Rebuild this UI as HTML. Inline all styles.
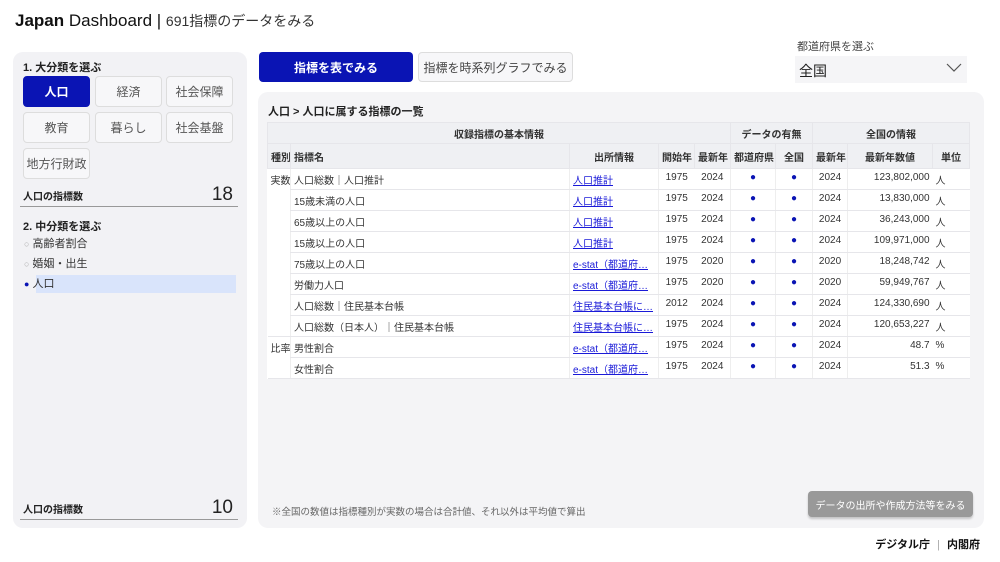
<!DOCTYPE html>
<html><head><meta charset="utf-8"><style>
*{box-sizing:border-box;margin:0;padding:0}
body{width:1000px;height:562px;background:#fff;font-family:"Liberation Sans","Noto Sans CJK JP",sans-serif;color:#222;position:relative;overflow:hidden}
.a{position:absolute}
.panel{background:#f2f2f5;border-radius:10px}
.btn{position:absolute;width:67px;height:31px;border:1px solid #ddd;border-radius:4px;background:#f7f7f9;font-size:12px;color:#555;display:flex;align-items:center;justify-content:center}
.btn.on{background:#0a14b4;color:#fff;border-color:#0a14b4;font-weight:bold}
table{border-collapse:collapse;font-size:10px;position:absolute;left:267px;top:122px;width:702px;table-layout:fixed;background:#fff}
td,th{border:1px solid #e6e6ea;height:21px;padding:0 3px;white-space:nowrap;overflow:hidden;color:#333}
th{background:#eff0f3;font-weight:bold;color:#333}
tbody td{border-left:none;border-right:none;vertical-align:top;padding-top:3px}
tbody td.v{border-left:1px solid #eee}
a{color:#1a1ad8;text-decoration:underline}
.dot{color:#0a14b4;font-size:10px}
.r{text-align:right}.c{text-align:center}
</style></head><body>
<div class="a" style="left:15px;top:11px;font-size:17px;color:#111"><b style="font-weight:bold">Japan</b> Dashboard <span style="font-weight:300">|</span> <span style="font-size:14px;color:#333">691指標のデータをみる</span></div>

<div class="a panel" style="left:13px;top:52px;width:234px;height:476px"></div>
<div class="a" style="left:23px;top:59px;font-size:11px;font-weight:bold">1. 大分類を選ぶ</div>
<div class="btn on" style="left:23px;top:76px">人口</div>
<div class="btn" style="left:95px;top:76px">経済</div>
<div class="btn" style="left:166px;top:76px">社会保障</div>
<div class="btn" style="left:23px;top:112px">教育</div>
<div class="btn" style="left:95px;top:112px">暮らし</div>
<div class="btn" style="left:166px;top:112px">社会基盤</div>
<div class="btn" style="left:23px;top:148px">地方行財政</div>
<div class="a" style="left:23px;top:188px;font-size:10px;font-weight:bold">人口の指標数</div>
<div class="a" style="left:205px;top:184px;font-size:19px;width:28px;text-align:right">18</div>
<div class="a" style="left:20px;top:206px;width:218px;height:1px;background:#999"></div>
<div class="a" style="left:23px;top:218px;font-size:11px;font-weight:bold">2. 中分類を選ぶ</div>
<div class="a" style="left:36px;top:275px;width:200px;height:18px;background:#d9e4fb"></div>
<div class="a" style="left:24px;top:234px;font-size:11px;color:#333;line-height:20px">
<div><span style="color:#aaa;font-size:9px">○</span> 高齢者割合</div>
<div><span style="color:#aaa;font-size:9px">○</span> 婚姻・出生</div>
<div><span style="color:#0a14b4;font-size:9px">●</span> 人口</div></div>
<div class="a" style="left:23px;top:501px;font-size:10px;font-weight:bold">人口の指標数</div>
<div class="a" style="left:205px;top:497px;font-size:19px;width:28px;text-align:right">10</div>
<div class="a" style="left:20px;top:519px;width:218px;height:1px;background:#999"></div>

<div class="a" style="left:259px;top:52px;width:154px;height:30px;background:#0a14b4;border-radius:4px;color:#fff;font-size:12px;font-weight:bold;display:flex;align-items:center;justify-content:center">指標を表でみる</div>
<div class="a" style="left:418px;top:52px;width:155px;height:30px;background:#f7f7f9;border:1px solid #ddd;border-radius:4px;color:#444;font-size:12px;display:flex;align-items:center;justify-content:center">指標を時系列グラフでみる</div>

<div class="a" style="left:797px;top:38px;font-size:11px;color:#444">都道府県を選ぶ</div>
<div class="a" style="left:795px;top:56px;width:172px;height:27px;background:#f5f5f7;font-size:14px;padding:5px 4px">全国</div>
<svg class="a" style="left:946px;top:63px" width="16" height="10"><path d="M1 1L8 8L15 1" stroke="#555" fill="none" stroke-width="1.2"/></svg>

<div class="a panel" style="left:258px;top:92px;width:726px;height:436px;background:#f4f4f6"></div>
<div class="a" style="left:268px;top:103px;font-size:11px;font-weight:bold">人口 &gt; 人口に属する指標の一覧</div>
<table>
<colgroup><col style="width:23px"><col style="width:279px"><col style="width:89px"><col style="width:36px"><col style="width:36px"><col style="width:45px"><col style="width:37px"><col style="width:35px"><col style="width:85px"><col style="width:37px"></colgroup>
<thead><tr><th colspan="5" class="c">収録指標の基本情報</th><th colspan="2" class="c">データの有無</th><th colspan="3" class="c">全国の情報</th></tr>
<tr style="height:25px"><th style="text-align:left">種別</th><th style="text-align:left">指標名</th><th class="c">出所情報</th><th class="c">開始年</th><th class="c">最新年</th><th class="c">都道府県</th><th class="c">全国</th><th class="c">最新年</th><th class="c">最新年数値</th><th class="c">単位</th></tr></thead>
<tbody>
<tr><td style="border-bottom:none">実数</td><td class="v">人口総数｜人口推計</td><td class="v"><a>人口推計</a></td><td class="v c">1975</td><td class="c">2024</td><td class="v c"><span class="dot">●</span></td><td class="v c"><span class="dot">●</span></td><td class="v c">2024</td><td class="v r">123,802,000</td><td>人</td></tr>
<tr><td style="border:none"></td><td class="v">15歳未満の人口</td><td class="v"><a>人口推計</a></td><td class="v c">1975</td><td class="c">2024</td><td class="v c"><span class="dot">●</span></td><td class="v c"><span class="dot">●</span></td><td class="v c">2024</td><td class="v r">13,830,000</td><td>人</td></tr>
<tr><td style="border:none"></td><td class="v">65歳以上の人口</td><td class="v"><a>人口推計</a></td><td class="v c">1975</td><td class="c">2024</td><td class="v c"><span class="dot">●</span></td><td class="v c"><span class="dot">●</span></td><td class="v c">2024</td><td class="v r">36,243,000</td><td>人</td></tr>
<tr><td style="border:none"></td><td class="v">15歳以上の人口</td><td class="v"><a>人口推計</a></td><td class="v c">1975</td><td class="c">2024</td><td class="v c"><span class="dot">●</span></td><td class="v c"><span class="dot">●</span></td><td class="v c">2024</td><td class="v r">109,971,000</td><td>人</td></tr>
<tr><td style="border:none"></td><td class="v">75歳以上の人口</td><td class="v"><a>e-stat（都道府…</a></td><td class="v c">1975</td><td class="c">2020</td><td class="v c"><span class="dot">●</span></td><td class="v c"><span class="dot">●</span></td><td class="v c">2020</td><td class="v r">18,248,742</td><td>人</td></tr>
<tr><td style="border:none"></td><td class="v">労働力人口</td><td class="v"><a>e-stat（都道府…</a></td><td class="v c">1975</td><td class="c">2020</td><td class="v c"><span class="dot">●</span></td><td class="v c"><span class="dot">●</span></td><td class="v c">2020</td><td class="v r">59,949,767</td><td>人</td></tr>
<tr><td style="border:none"></td><td class="v">人口総数｜住民基本台帳</td><td class="v"><a>住民基本台帳に…</a></td><td class="v c">2012</td><td class="c">2024</td><td class="v c"><span class="dot">●</span></td><td class="v c"><span class="dot">●</span></td><td class="v c">2024</td><td class="v r">124,330,690</td><td>人</td></tr>
<tr><td style="border-top:none"></td><td class="v">人口総数（日本人）｜住民基本台帳</td><td class="v"><a>住民基本台帳に…</a></td><td class="v c">1975</td><td class="c">2024</td><td class="v c"><span class="dot">●</span></td><td class="v c"><span class="dot">●</span></td><td class="v c">2024</td><td class="v r">120,653,227</td><td>人</td></tr>
<tr><td style="border-bottom:none">比率</td><td class="v">男性割合</td><td class="v"><a>e-stat（都道府…</a></td><td class="v c">1975</td><td class="c">2024</td><td class="v c"><span class="dot">●</span></td><td class="v c"><span class="dot">●</span></td><td class="v c">2024</td><td class="v r">48.7</td><td>%</td></tr>
<tr><td style="border-top:none"></td><td class="v">女性割合</td><td class="v"><a>e-stat（都道府…</a></td><td class="v c">1975</td><td class="c">2024</td><td class="v c"><span class="dot">●</span></td><td class="v c"><span class="dot">●</span></td><td class="v c">2024</td><td class="v r">51.3</td><td>%</td></tr>
</tbody></table>

<div class="a" style="left:272px;top:504px;font-size:9.5px;color:#666">※全国の数値は指標種別が実数の場合は合計値、それ以外は平均値で算出</div>
<div class="a" style="left:808px;top:491px;width:165px;height:26px;background:#999;border-radius:4px;color:#fff;font-size:10px;display:flex;align-items:center;justify-content:center;box-shadow:0 2px 2px rgba(0,0,0,.2)">データの出所や作成方法等をみる</div>
<div class="a" style="right:20px;top:536px;font-size:11px;color:#111;font-weight:bold">デジタル庁 <span style="color:#aaa;margin:0 4px;font-weight:normal">|</span> 内閣府</div>
</body></html>
